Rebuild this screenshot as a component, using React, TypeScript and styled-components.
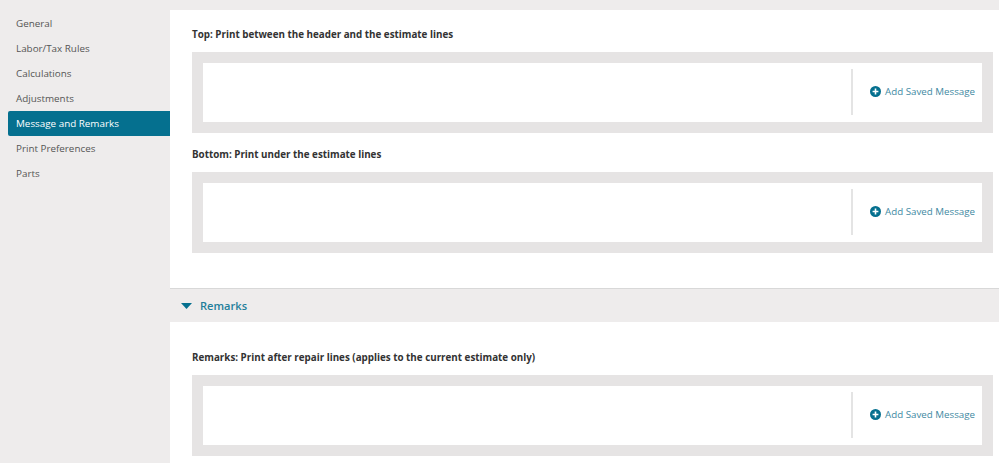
import { createGlobalStyle, styled } from "styled-components";

const teal = "#05708f";

const GlobalStyle = createGlobalStyle`
  html, body {
    margin: 0;
    padding: 0;
    height: 463px;
    overflow: hidden;
    background-color: #eeecec;
    font-family: "Open Sans", "Liberation Sans", sans-serif;
  }
`;

const Page = styled.div`
  display: flex;
  width: 999px;
  height: 463px;
  overflow: hidden;
  background-color: #eeecec;
`;

const Sidebar = styled.nav`
  width: 162px;
  padding: 11px 0 0 8px;
  flex-shrink: 0;
  display: flex;
  flex-direction: column;
`;

const NavItem = styled.div<{ $active?: boolean }>`
  height: 25px;
  line-height: 24px;
  padding-left: 8px;
  font-size: 9.85px;
  color: ${(props) => (props.$active ? "#ffffff" : "#555555")};
  background-color: ${(props) => (props.$active ? teal : "transparent")};
  border-radius: ${(props) => (props.$active ? "2px 0 0 2px" : "0")};
`;

const Main = styled.main`
  flex: 1;
  margin-top: 10px;
  display: flex;
  flex-direction: column;
`;

const Section = styled.section`
  background-color: #ffffff;
  padding: 0 6px 0 22px;
`;

const TopSection = styled(Section)`
  height: 278px;
`;

const BottomSection = styled(Section)`
  flex: 1;
`;

const FieldLabel = styled.h3<{ $top: number }>`
  margin: 0;
  padding-top: ${(props) => props.$top}px;
  height: 17px;
  line-height: 17px;
  font-size: 9.82px;
  font-weight: 700;
  color: #333333;
`;

const MessageBox = styled.div`
  margin-top: 9px;
  height: 81px;
  box-sizing: border-box;
  padding: 11px;
  background-color: #e6e4e4;
`;

const MessageInner = styled.div`
  height: 59px;
  background-color: #ffffff;
  display: flex;
  align-items: center;
  justify-content: flex-end;
`;

const AddButton = styled.div`
  height: 46px;
  width: 131px;
  margin-bottom: 1px;
  box-sizing: border-box;
  border-left: 2px solid #e4e4e4;
  padding: 0 0 1px 17px;
  display: flex;
  align-items: center;
  gap: 4px;
  font-size: 9.75px;
  color: #3f8aa3;
  white-space: nowrap;
`;

const AccordionHeader = styled.div`
  height: 34px;
  box-sizing: border-box;
  border-top: 1px solid #d8d8d8;
  padding-left: 11px;
  display: flex;
  align-items: center;
  gap: 8px;
  font-size: 11.1px;
  font-weight: 600;
  color: #1f7f9b;
`;

function PlusIcon() {
  return (
    <svg width="11" height="11" viewBox="0 0 11 11">
      <circle cx="5.5" cy="5.5" r="5.5" fill={teal} />
      <path d="M5.5 2.6v5.8M2.6 5.5h5.8" stroke="#ffffff" strokeWidth="1.6" />
    </svg>
  );
}

function Caret() {
  return (
    <svg width="11" height="6" viewBox="0 0 11 6">
      <path d="M0 0h11L5.5 6z" fill={teal} />
    </svg>
  );
}

function MessageField() {
  return (
    <MessageBox>
      <MessageInner>
        <AddButton>
          <PlusIcon />
          Add Saved Message
        </AddButton>
      </MessageInner>
    </MessageBox>
  );
}

const navItems = [
  "General",
  "Labor/Tax Rules",
  "Calculations",
  "Adjustments",
  "Message and Remarks",
  "Print Preferences",
  "Parts",
];

export default function App() {
  return (
    <>
      <GlobalStyle />
      <Page>
        <Sidebar>
          {navItems.map((item) => (
            <NavItem key={item} $active={item === "Message and Remarks"}>
              {item}
            </NavItem>
          ))}
        </Sidebar>
        <Main>
          <TopSection>
            <FieldLabel $top={16}>Top: Print between the header and the estimate lines</FieldLabel>
            <MessageField />
            <FieldLabel $top={13}>Bottom: Print under the estimate lines</FieldLabel>
            <MessageField />
          </TopSection>
          <AccordionHeader>
            <Caret />
            Remarks
          </AccordionHeader>
          <BottomSection>
            <FieldLabel $top={27}>Remarks: Print after repair lines (applies to the current estimate only)</FieldLabel>
            <MessageField />
          </BottomSection>
        </Main>
      </Page>
    </>
  );
}
